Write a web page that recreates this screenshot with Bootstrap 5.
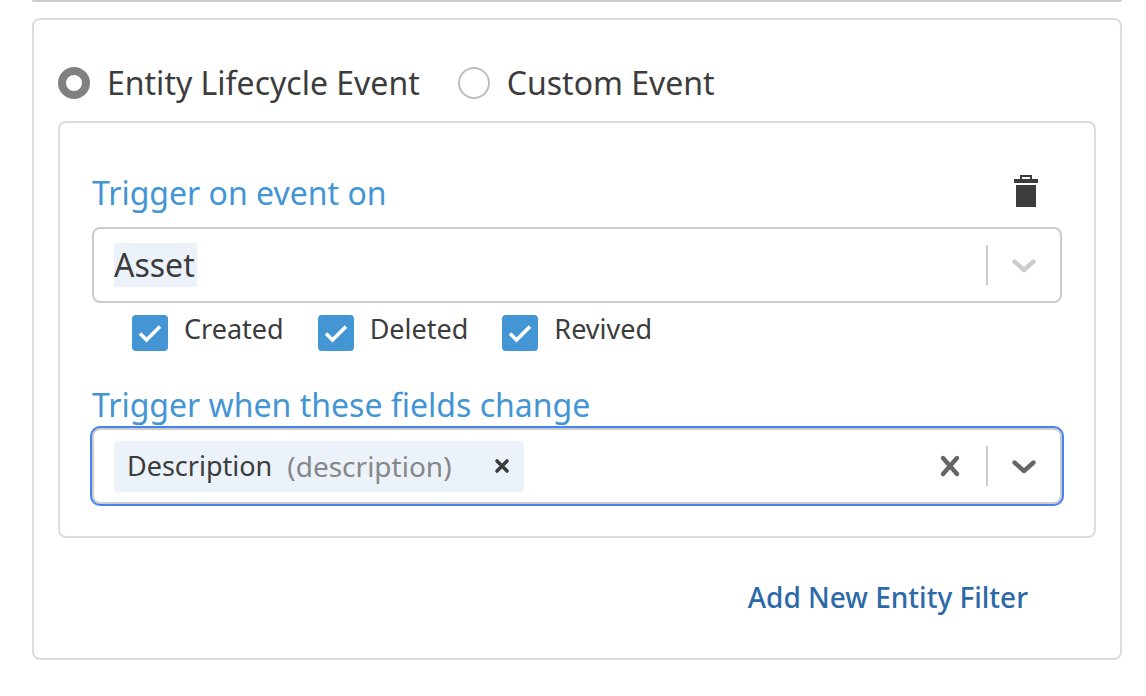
<!DOCTYPE html>
<html lang="en">
<head>
<meta charset="utf-8">
<meta name="viewport" content="width=device-width, initial-scale=1">
<title>Entity event trigger</title>
<link href="https://cdn.jsdelivr.net/npm/bootstrap@5.3.0/dist/css/bootstrap.min.css" rel="stylesheet">
<style>
body { font-family: "Noto Sans", sans-serif; font-size: 32px; color: #3c3c3c; background: #fff; }
main { padding: 0 24px 36px 32px; }
.previous-panel { height: 2px; background: #ccc; border-radius: 0 0 8px 8px; margin-bottom: 16px; }
.panel { border: 2px solid #dcdcdc; border-radius: 8px; }
.panel-outer { padding: 38px 24px 37px; }
.panel-inner { padding: 47px 32px 32px; margin-top: 13px; }
.kind-row { height: 50px; gap: 38px; }
.kind-row label { gap: 17px; line-height: 50px; }
.kind-row .form-check-input { width: 32px; height: 32px; margin: 0; border: 2px solid #bebebe; background: #fff; }
.kind-row .form-check-input:checked { border: 8px solid #808080; }
.heading { color: #4495d3; line-height: 46px; }
.heading-row { margin-bottom: 11px; }
.fields-heading { margin-top: 31px; }
.icon-btn { border: 0; padding: 0; background: none; display: flex; align-items: center; color: #666; }
.delete-btn { height: 42px; }
.field { height: 76px; border: 2px solid #ccc; border-radius: 8px; background: #fff; }
.entity-select { appearance: none; width: 100%; height: 100%; border: 0; padding: 0 84px 0 20px; color: inherit; outline: 0;
  background: linear-gradient(#ebf2f9, #ebf2f9) 20px 50% / 83px 44px no-repeat; }
.select-mark { right: 0; top: 0; bottom: 0; pointer-events: none; color: #ccc; }
.rule { width: 2px; height: 40px; background: #ccc; }
.chevron { margin: 0 24px; }
.events { padding: 12px 0 0 40px; gap: 34px; font-size: 27px; }
.events label { gap: 16px; line-height: 28px; }
.events .form-check-input { width: 36px; height: 36px; margin: 0; border: 0; border-radius: 4px; }
.events .form-check-input:checked { background: #4495d3 url("data:image/svg+xml,%3Csvg xmlns='http://www.w3.org/2000/svg' viewBox='0 0 36 36'%3E%3Cpath d='M8 18.500l6.500 6.500L28 11.500' fill='none' stroke='%23fff' stroke-width='3.600'/%3E%3C/svg%3E") center / 36px 36px no-repeat; }
.field-active { box-shadow: 0 0 0 2px #4583f2; padding-left: 20px; }
.token { height: 51px; background: #ebf2f9; border-radius: 4px; padding: 0 14px 0 13px; font-size: 27px; }
.token .icon-btn { color: #3c3c3c; }
.field-key { color: #858789; font-size: 28px; min-width: 186px; margin: 0 21px 0 15px; }
.search-input { border: 0; outline: 0; min-width: 0; background: none; }
.add-btn { border: 0; padding: 0; background: none; color: #2b69a8; font-size: 28px; font-weight: 500; line-height: 48px; margin: 35px 68px 0 0; }
</style>
</head>
<body>
<main>
  <div class="previous-panel"></div>
  <section class="panel panel-outer">
    <div class="kind-row d-flex align-items-center">
      <label class="d-flex align-items-center" for="lifecycle"><input class="form-check-input" type="radio" name="kind" id="lifecycle" checked>Entity Lifecycle Event</label>
      <label class="d-flex align-items-center" for="custom"><input class="form-check-input" type="radio" name="kind" id="custom">Custom Event</label>
    </div>
    <div class="panel panel-inner">
      <div class="heading-row d-flex justify-content-between align-items-start">
        <label class="heading" for="entity">Trigger on event on</label>
        <button class="icon-btn delete-btn me-4" type="button" aria-label="Delete filter">
          <svg width="24" height="32" viewBox="0 0 24 32" fill="#3c3c3c"><path fill-rule="evenodd" d="M6 0H18V4H24V8H0V4H6ZM8 2V4H16V2ZM2 10H22V32H2Z"/></svg>
        </button>
      </div>
      <div class="field position-relative">
        <select class="entity-select" id="entity"><option>Asset</option></select>
        <div class="select-mark position-absolute d-flex align-items-center">
          <span class="rule"></span>
          <svg class="chevron" width="24" height="16" viewBox="0 0 24 16" fill="none" stroke="currentColor" stroke-width="4.400" stroke-linecap="round" stroke-linejoin="round"><path d="M2.500 4.500L12 13L21.500 4.500"/></svg>
        </div>
      </div>
      <div class="events d-flex flex-wrap">
        <label class="d-flex" for="created"><input class="form-check-input" type="checkbox" id="created" checked>Created</label>
        <label class="d-flex" for="deleted"><input class="form-check-input" type="checkbox" id="deleted" checked>Deleted</label>
        <label class="d-flex" for="revived"><input class="form-check-input" type="checkbox" id="revived" checked>Revived</label>
      </div>
      <label class="heading fields-heading d-block" for="fields">Trigger when these fields change</label>
      <div class="field field-active d-flex align-items-center">
        <div class="token d-flex align-items-center">
          <span>Description</span><span class="field-key">(description)</span>
          <button class="icon-btn" type="button" aria-label="Remove Description"><svg width="16" height="16" viewBox="0 0 16 16" fill="none" stroke="currentColor" stroke-width="3.600" stroke-linecap="round"><path d="M3 3L13 13M13 3L3 13"/></svg></button>
        </div>
        <input class="search-input flex-grow-1" type="text" id="fields">
        <button class="icon-btn me-4" type="button" aria-label="Clear all"><svg width="24" height="24" viewBox="0 0 24 24" fill="none" stroke="currentColor" stroke-width="4.400" stroke-linecap="round"><path d="M5 4L19 20M19 4L5 20"/></svg></button>
        <span class="rule"></span>
        <button class="icon-btn chevron" type="button" aria-label="Show fields"><svg width="24" height="16" viewBox="0 0 24 16" fill="none" stroke="currentColor" stroke-width="4.400" stroke-linecap="round" stroke-linejoin="round"><path d="M2.500 4.500L12 13L21.500 4.500"/></svg></button>
      </div>
    </div>
    <div class="d-flex justify-content-end"><button class="add-btn" type="button">Add New Entity Filter</button></div>
  </section>
</main>
<script src="https://cdn.jsdelivr.net/npm/bootstrap@5.3.0/dist/js/bootstrap.bundle.min.js"></script>
</body>
</html>
